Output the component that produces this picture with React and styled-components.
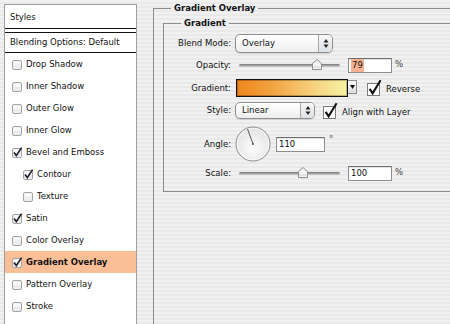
import React from "react";
import styled, { createGlobalStyle } from "styled-components";

const GlobalStyle = createGlobalStyle`
  html, body {
    margin: 0;
    padding: 0;
    overflow: hidden;
  }
  body {
    width: 450px;
    height: 324px;
    font-family: "DejaVu Sans", "Liberation Sans", sans-serif;
    font-size: 8.5px;
    color: #111;
    background: repeating-linear-gradient(to bottom, #f1f1f1 0 2px, #e9e9e9 2px 4px);
  }
`;

const layers = [
  { name: "Drop Shadow" },
  { name: "Inner Shadow" },
  { name: "Outer Glow" },
  { name: "Inner Glow" },
  { name: "Bevel and Emboss", checked: true },
  { name: "Contour", checked: true, indent: true },
  { name: "Texture", indent: true },
  { name: "Satin", checked: true },
  { name: "Color Overlay" },
  { name: "Gradient Overlay", checked: true, selected: true },
  { name: "Pattern Overlay" },
  { name: "Stroke" },
];

//////////////// ICONS ////////////////
const SmallCheck = ({ checked }) => (
  <svg width="11" height="11" viewBox="0 0 11 11">
    <rect x="0.5" y="1.5" width="9" height="9" rx="1.5" fill="#ededed" stroke="#a3a3a3" />
    <rect x="1.5" y="2.5" width="7" height="3" fill="#fafafa" />
    {checked && (
      <path d="M2 5.6 L4.3 8.6 L9.6 0.6" fill="none" stroke="#1c2130" strokeWidth="1.7" />
    )}
  </svg>
);

const BigCheck = () => (
  <svg width="15" height="17" viewBox="0 0 15 17">
    <rect x="0.5" y="4.5" width="12" height="12" fill="#fff" stroke="#7d7d7d" />
    <path d="M2.6 9.8 L5.6 14.2 L13.6 1.2" fill="none" stroke="#111" strokeWidth="2.1" />
  </svg>
);

const Arrows = () => (
  <svg width="6" height="11" viewBox="0 0 6 11">
    <path d="M3 1 L5.5 4.5 L0.5 4.5 Z" fill="#222" />
    <path d="M3 10 L5.5 6.5 L0.5 6.5 Z" fill="#222" />
  </svg>
);

const ThumbShape = () => (
  <svg width="10" height="11" viewBox="0 0 10 11">
    <path d="M5 0.5 L9.5 4.5 L9.5 10.5 L0.5 10.5 L0.5 4.5 Z" fill="#f4f4f4" stroke="#8c8c8c" />
    <path d="M1.5 8 L8.5 8" stroke="#cfcfcf" />
  </svg>
);

const Dial = ({ angle }) => {
  const r = (angle * Math.PI) / 180;
  const x2 = 18 + Math.cos(r) * 16;
  const y2 = 18 - Math.sin(r) * 16;
  return (
    <svg width="36" height="36" viewBox="0 0 36 36">
      <defs>
        <radialGradient id="dialFill" cx="50%" cy="60%" r="60%">
          <stop offset="0%" stopColor="#fdfdfd" />
          <stop offset="100%" stopColor="#e2e2e2" />
        </radialGradient>
      </defs>
      <circle cx="18" cy="18" r="17" fill="url(#dialFill)" stroke="#8b8b8b" />
      <circle cx="18" cy="18" r="15.8" fill="none" stroke="#ffffff" strokeOpacity="0.8" />
      <line x1="18" y1="18" x2={x2} y2={y2} stroke="#555" strokeWidth="1" />
      <circle cx="18" cy="18" r="1" fill="#555" />
    </svg>
  );
};

//////////////// PARTS ////////////////
function Slider({ value, max }) {
  const left = Math.round((value / max) * 91);
  return (
    <SliderBox>
      <Track />
      <Thumb style={{ left }}>
        <ThumbShape />
      </Thumb>
    </SliderBox>
  );
}

function Popup({ width, height, children }) {
  return (
    <Select $w={width} $h={height}>
      <SelectText>{children}</SelectText>
      <Stepper>
        <Arrows />
      </Stepper>
    </Select>
  );
}

export default function App() {
  return (
    <Window>
      <GlobalStyle />
      <StylesList>
        <ListHeader>Styles</ListHeader>
        <BlendingRow>Blending Options: Default</BlendingRow>
        {layers.map((l) => (
          <LayerRow key={l.name} $indent={l.indent} $selected={l.selected}>
            <SmallCheck checked={l.checked} />
            <span>{l.name}</span>
          </LayerRow>
        ))}
      </StylesList>

      <Pane>
        <Group $outer>
          <Legend $outer>Gradient Overlay</Legend>
          <Group>
            <Legend>Gradient</Legend>
            <Row $h={20}>
              <Label>Blend Mode:</Label>
              <Popup width={98} height={19}>Overlay</Popup>
            </Row>
            <Row $h={24}>
              <Label>Opacity:</Label>
              <Slider value={79} max={98} />
              <NumberField>
                <Selected>79</Selected>
              </NumberField>
              <Unit>%</Unit>
            </Row>
            <Row $h={21}>
              <Label>Gradient:</Label>
              <Swatch />
              <SwatchArrow>
                <svg width="5" height="4" viewBox="0 0 5 4">
                  <path d="M0 0 L5 0 L2.5 4 Z" fill="#111" />
                </svg>
              </SwatchArrow>
              <CheckLabel $gap={10}>
                <BigCheck />
                <span>Reverse</span>
              </CheckLabel>
            </Row>
            <Row $h={24}>
              <Label>Style:</Label>
              <Popup width={80} height={17}>Linear</Popup>
              <CheckLabel $gap={8}>
                <BigCheck />
                <span>Align with Layer</span>
              </CheckLabel>
            </Row>
            <Row $h={44}>
              <Label>Angle:</Label>
              <Dial angle={110} />
              <NumberField $w={49} $gap={5}>110</NumberField>
              <Degree>°</Degree>
            </Row>
            <Row $h={14}>
              <Label>Scale:</Label>
              <Slider value={100} max={155} />
              <NumberField>100</NumberField>
              <Unit>%</Unit>
            </Row>
          </Group>
        </Group>
      </Pane>
    </Window>
  );
}

//////////////// STYLES ////////////////
const Window = styled.div`
  display: flex;
  height: 324px;
  overflow: hidden;
`;

const StylesList = styled.div`
  flex: none;
  margin: 4px 0 0 4px;
  width: 131px;
  height: 330px;
  background: #fff;
  border: 1px solid #9d9d9d;
  border-bottom: none;
`;

const ListHeader = styled.div`
  height: 23px;
  line-height: 24px;
  padding-left: 5px;
  border-bottom: 1px solid #111;
`;

const BlendingRow = styled.div`
  margin-top: 3px;
  height: 19px;
  line-height: 19px;
  padding-left: 5px;
  border-top: 1px solid #111;
  border-bottom: 1px solid #111;
`;

const LayerRow = styled.div`
  display: flex;
  align-items: center;
  gap: 3px;
  height: 22px;
  padding-left: ${(p) => (p.$indent ? 18 : 7)}px;
  background: ${(p) => (p.$selected ? "#fbbf98" : "transparent")};
  font-weight: ${(p) => (p.$selected ? "bold" : "normal")};
`;

const Pane = styled.div`
  flex: 1;
  min-width: 0;
`;

const Group = styled.fieldset`
  margin: ${(p) => (p.$outer ? "2px 0 0 16px" : "0")};
  padding: ${(p) => (p.$outer ? "3px 0 0 9px" : "4px 0 11px 0")};
  border: 1px solid #8b8b8b;
  border-right: none;
  ${(p) => (p.$outer ? "border-bottom: none; min-height: 340px;" : "")}
  min-inline-size: 0;
`;

const Legend = styled.legend`
  margin-left: ${(p) => (p.$outer ? 8 : 17)}px;
  padding: 0 3px;
  font-weight: bold;
  font-size: 8.5px;
  line-height: 12px;
`;

const Row = styled.div`
  display: flex;
  align-items: center;
  height: ${(p) => p.$h}px;
`;

const Label = styled.div`
  flex: none;
  width: 67px;
  padding-right: 4px;
  text-align: right;
`;

const Select = styled.div`
  flex: none;
  display: flex;
  align-items: stretch;
  box-sizing: border-box;
  width: ${(p) => p.$w}px;
  height: ${(p) => p.$h}px;
  border: 1px solid #8f8f8f;
  border-radius: 5px;
  background: linear-gradient(#ffffff, #f7f7f7 50%, #ececec);
  box-shadow: 0 1px 1px rgba(0, 0, 0, 0.12);
`;

const SelectText = styled.span`
  flex: 1;
  display: flex;
  align-items: center;
  padding-left: 6px;
`;

const Stepper = styled.span`
  width: 13px;
  display: flex;
  align-items: center;
  justify-content: center;
  border-left: 1px solid #a7a7a7;
  border-radius: 0 4px 4px 0;
  background: linear-gradient(#f8f8f8, #dde1e6);
`;

const SliderBox = styled.div`
  position: relative;
  flex: none;
  width: 101px;
  height: 12px;
  margin-left: 4px;
`;

const Track = styled.div`
  position: absolute;
  left: 0;
  right: 0;
  top: 5px;
  height: 3px;
  border-radius: 2px;
  background: linear-gradient(#777, #a9a9a9 60%, #d4d4d4);
`;

const Thumb = styled.div`
  position: absolute;
  top: 0;
  width: 10px;
  height: 11px;
  display: flex;
`;

const NumberField = styled.div`
  flex: none;
  box-sizing: border-box;
  width: ${(p) => p.$w || 44}px;
  height: 15px;
  margin-left: ${(p) => p.$gap || 8}px;
  padding-left: 2px;
  line-height: 13px;
  background: #fff;
  border: 1px solid #8e8e8e;
  border-top-color: #6f6f6f;
  box-shadow: inset 0 1px 1px rgba(0, 0, 0, 0.12);
`;

const Selected = styled.span`
  display: inline-block;
  padding: 0 1px;
  background: #f6b28f;
`;

const Unit = styled.span`
  margin-left: 3px;
  margin-top: -2px;
  color: #444;
`;

const Degree = styled.span`
  margin-left: 4px;
  align-self: flex-start;
  margin-top: 12px;
  color: #444;
`;

const Swatch = styled.div`
  flex: none;
  box-sizing: border-box;
  width: 112px;
  height: 18px;
  margin-left: 1px;
  border: 1px solid #111;
  box-shadow: inset 0 0 0 1px rgba(0, 0, 0, 0.25);
  background: linear-gradient(to right, #ef861f 0%, #f3a645 35%, #f6d27e 70%, #f8f1a6 100%);
`;

const SwatchArrow = styled.div`
  flex: none;
  box-sizing: border-box;
  width: 9px;
  height: 14px;
  display: flex;
  align-items: center;
  justify-content: center;
  align-self: flex-start;
  margin-top: 3px;
  border: 1px solid #8c8c8c;
  border-left: none;
  background: linear-gradient(#fafafa, #dcdcdc);
`;

const CheckLabel = styled.label`
  display: flex;
  align-items: flex-end;
  gap: 4px;
  margin-left: ${(p) => p.$gap}px;
  span {
    padding-bottom: 2px;
  }
`;
